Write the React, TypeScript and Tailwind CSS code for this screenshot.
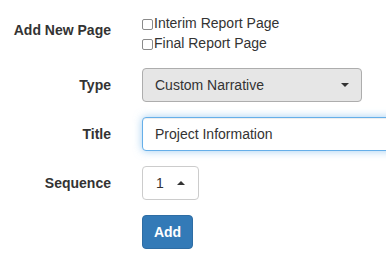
import React from "react";

export default function App() {
  const font = { fontFamily: '"Liberation Sans", Arial, sans-serif' };
  return (
    <div className="w-[386px] h-[268px] overflow-hidden bg-white text-[14px] text-[#333]" style={font}>
      <div className="grid grid-cols-[111px_244px] gap-x-[31px] pt-[13px]">
        {/* Row 1 */}
        <div className="text-right font-bold leading-5 pt-[7px] mb-[15px]">Add New Page</div>
        <div className="flex flex-col mb-[15px]">
          <label className="flex items-center h-5 leading-5">
            <span className="w-[11px] h-[11px] border border-[#8a8a8a] rounded-[2px] bg-white mr-[1px] mt-[2px]" />
            <span>Interim Report Page</span>
          </label>
          <label className="flex items-center h-5 leading-5">
            <span className="w-[11px] h-[11px] border border-[#8a8a8a] rounded-[2px] bg-white mr-[1px] mt-[2px]" />
            <span>Final Report Page</span>
          </label>
        </div>

        {/* Row 2 */}
        <div className="text-right font-bold leading-5 pt-[7px] mb-[15px]">Type</div>
        <div className="mb-[15px]">
          <div className="w-[220px] h-[34px] flex items-center justify-between pl-[12px] pr-[12px] bg-[#e6e6e6] border border-[#adadad] rounded-[4px]">
            <span>Custom Narrative</span>
            <span className="w-0 h-0 border-l-[4px] border-r-[4px] border-t-[4px] border-l-transparent border-r-transparent border-t-[#333]" />
          </div>
        </div>

        {/* Row 3 */}
        <div className="text-right font-bold leading-5 pt-[7px] mb-[15px]">Title</div>
        <div className="mb-[15px]">
          <div className="w-[260px] h-[34px] flex items-center pl-[12px] bg-white border border-[#66afe9] rounded-[4px] shadow-[inset_0_1px_1px_rgba(0,0,0,0.075),0_0_8px_rgba(102,175,233,0.6)]">
            <span>Project Information</span>
          </div>
        </div>

        {/* Row 4 */}
        <div className="text-right font-bold leading-5 pt-[7px] mb-[15px]">Sequence</div>
        <div className="mb-[15px]">
          <div className="w-[57px] h-[34px] flex items-center justify-between pl-[13px] pr-[13px] bg-white border border-[#ccc] rounded-[4px]">
            <span>1</span>
            <span className="w-0 h-0 border-l-[4px] border-r-[4px] border-b-[4px] border-l-transparent border-r-transparent border-b-[#333]" />
          </div>
        </div>

        {/* Row 5 */}
        <div />
        <div>
          <button className="w-[51px] h-[34px] bg-[#337ab7] border border-[#2e6da4] rounded-[4px] text-white font-bold">
            Add
          </button>
        </div>
      </div>
    </div>
  );
}
